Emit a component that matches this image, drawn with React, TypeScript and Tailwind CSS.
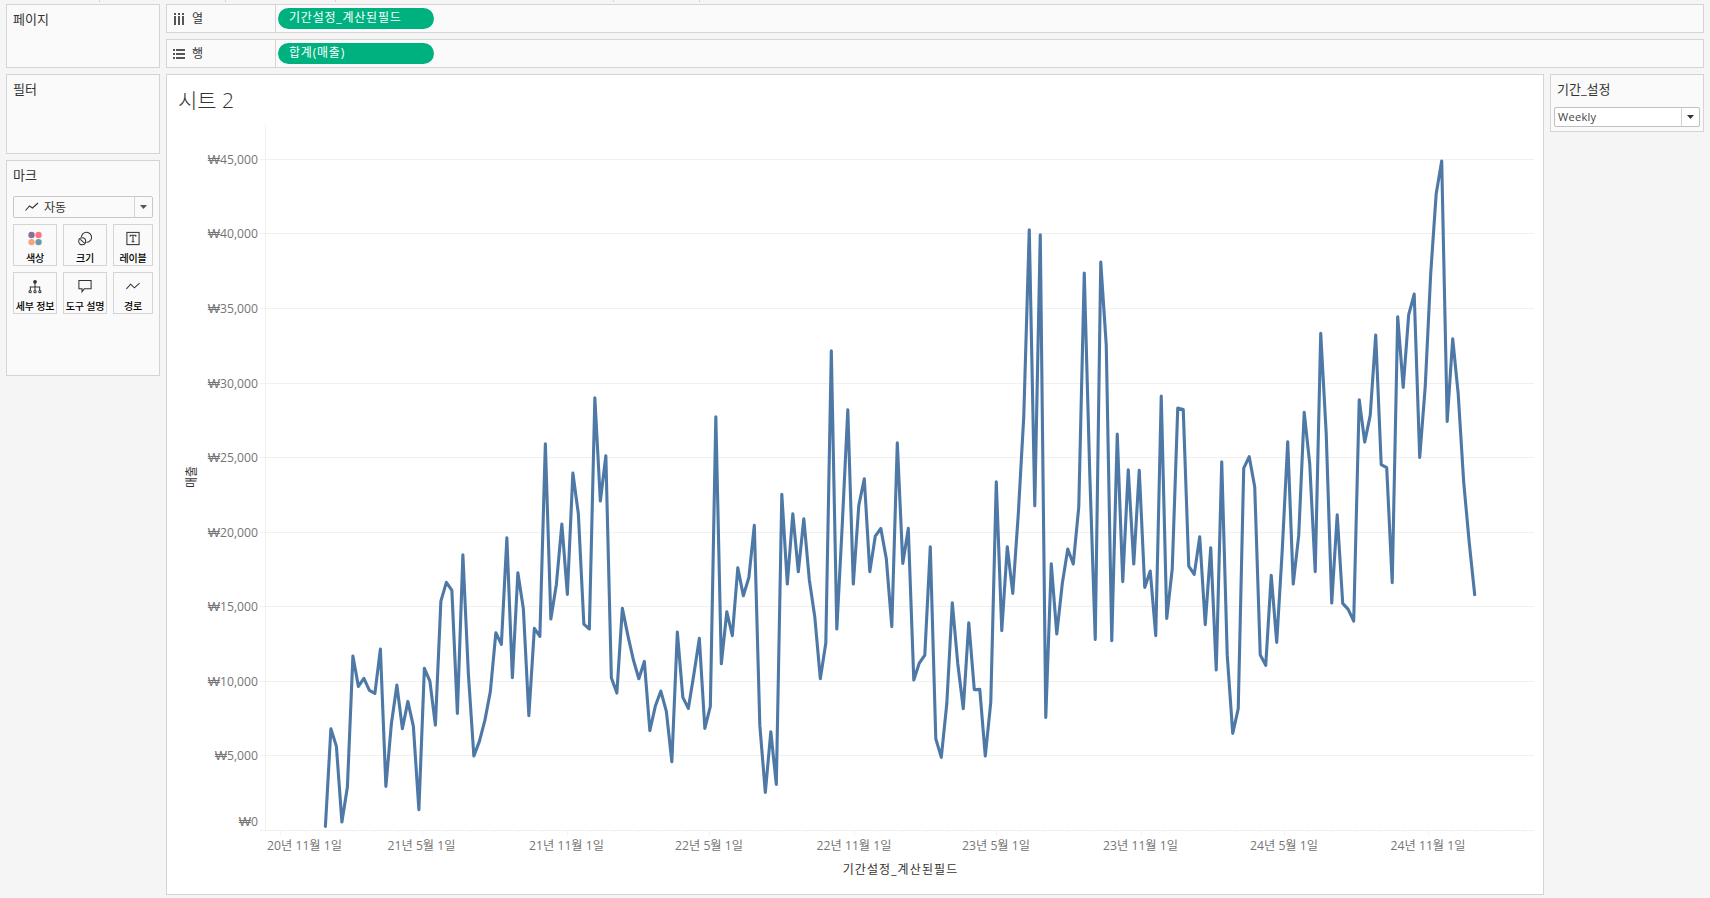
import type {ReactNode} from 'react';

// weekly sales, vertical position in thirds of a pixel
const WEEKLY = [
    1338, 1045, 1098, 1325, 1220, 827, 918, 894, 930, 939, 806, 1218, 1030, 914, 1045, 963, 1038, 1288, 864, 902,
    1034, 662, 606, 630, 999, 523, 880, 1127, 1083, 1020, 933, 757, 792, 472, 892, 577, 685, 1006, 744, 768,
    190, 716, 612, 431, 642, 278, 400, 731, 746, 52, 362, 226, 892, 938, 684, 765, 838, 895, 843, 1051,
    977, 932, 993, 1144, 755, 951, 984, 882, 774, 1044, 978, 109, 850, 694, 766, 562, 646, 592, 435, 1035,
    1236, 1054, 1212, 342, 611, 400, 574, 415, 598, 710, 895, 788, -89, 746, 430, 88, 611, 375, 295, 574,
    467, 444, 535, 739, 187, 549, 444, 899, 848, 824, 499, 1075, 1131, 970, 667, 850, 985, 727, 928, 927,
    1127, 965, 304, 751, 499, 639, 402, 108, -452, 376, -437, 1011, 550, 761, 610, 506, 551, 380, -322, 280,
    777, -355, -105, 781, 161, 604, 268, 551, 270, 621, 572, 766, 47, 714, 565, 83, 87, 557, 582, 469,
    733, 502, 869, 244, 825, 1059, 985, 263, 229, 320, 823, 855, 585, 786, 510, 184, 611, 465, 96, 250,
    574, -141, 160, 668, 403, 669, 687, 722, 58, 185, 105, -136, 253, 262, 607, -191, 21, -197, -259, 231,
    20, -320, -560, -658, 123, -125, 40, 305, 485, 643,
];

const LINE = WEEKLY.map((v, i) => `${(158.4 + i * 5.499).toFixed(2)},${(305.4 + v / 3).toFixed(2)}`).join(' ');

const GRID = [
    {y: 84, label: '45,000'},
    {y: 158, label: '40,000'},
    {y: 233, label: '35,000'},
    {y: 308, label: '30,000'},
    {y: 382, label: '25,000'},
    {y: 457, label: '20,000'},
    {y: 531, label: '15,000'},
    {y: 606, label: '10,000'},
    {y: 680, label: '5,000'},
];

const X_LABELS = [
    {x: 137.5, label: '20년 11월 1일'},
    {x: 254.5, label: '21년 5월 1일'},
    {x: 399.5, label: '21년 11월 1일'},
    {x: 542, label: '22년 5월 1일'},
    {x: 687, label: '22년 11월 1일'},
    {x: 829, label: '23년 5월 1일'},
    {x: 973.5, label: '23년 11월 1일'},
    {x: 1117, label: '24년 5월 1일'},
    {x: 1261, label: '24년 11월 1일'},
];

const START = Date.UTC(2020, 10, 1);
const MONTHS = Array.from({length: 53}, (_, i) => {
    const days = (Date.UTC(2020, 10 + i, 1) - START) / 86400000;
    return {x: Math.round(113 + days * 0.7859) + 0.5, major: i % 6 === 0};
});

const Card = ({className, title, children}: {className: string; title: string; children?: ReactNode}) => (
    <section className={`border border-[#d4d4d4] bg-[#fafafa] ${className}`}>
        <h2 className="pl-1.5 pt-1.5 text-[13px] leading-[17px] text-[#333]">{title}</h2>
        {children}
    </section>
);

const Shelf = ({icon, name, pill}: {icon: ReactNode; name: string; pill: string}) => (
    <div className="flex h-[29px] border border-[#d4d4d4] bg-[#fafafa]">
        <div className="flex w-[109px] items-center gap-[7px] border-r border-[#d4d4d4] pl-1.5 text-xs text-[#333]">
            {icon}
            <span className="pt-px">{name}</span>
        </div>
        <div className="ml-0.5 mt-[3px] h-[21px] w-[156px] whitespace-nowrap rounded-full bg-[#00b180] pl-[11px] text-[12px] leading-5 tracking-[0.8px] text-white">
            {pill}
        </div>
    </div>
);

const MarkButton = ({label, children}: {label: string; children: ReactNode}) => (
    <button className="flex h-[42px] flex-col items-center border border-[#d4d4d4] bg-[#fafafa] pt-1.5">
        <svg width="16" height="16" viewBox="0 0 16 16" fill="none" stroke="#333" strokeWidth="1.1">{children}</svg>
        <span className="mt-[5px] whitespace-nowrap text-[10px] font-medium leading-[14px] tracking-[-0.2px] text-black">{label}</span>
    </button>
);

const Won = () => <tspan fontFamily="Liberation Sans" fontSize="13">₩</tspan>;

const Chart = () => (
    <svg className="block" width="1376" height="819" viewBox="0 0 1376 819">
        <g stroke="#f0f0f0" shapeRendering="crispEdges">
            {GRID.map(g => <line key={g.y} x1="93" x2="1367" y1={g.y + 0.5} y2={g.y + 0.5}/>)}
            <line x1="93" x2="1367" y1="755.5" y2="755.5"/>
            <line x1="98.5" x2="98.5" y1="50" y2="755"/>
            {MONTHS.map(m => <line key={m.x} x1={m.x} x2={m.x} y1="756" y2={m.major ? 760 : 757}/>)}
        </g>
        <g fill="#757575" fontSize="12.2">
            {GRID.map(g => <text key={g.y} x="91" y={g.y + 5} textAnchor="end"><Won/>{g.label}</text>)}
            <text x="91" y="751" textAnchor="end"><Won/>0</text>
            {X_LABELS.map(l => <text key={l.x} x={l.x} y="775" textAnchor="middle">{l.label}</text>)}
        </g>
        <text x="733.5" y="799" textAnchor="middle" fontSize="12" letterSpacing="1.1" fill="#333">기간설정_계산된필드</text>
        <text transform="translate(29 402) rotate(-90)" textAnchor="middle" fontSize="12" fill="#333">매출</text>
        <polyline points={LINE} fill="none" stroke="#4e79a7" strokeWidth="3.1" strokeLinejoin="round" strokeLinecap="round"/>
    </svg>
);

const App = () => (
    <div className="h-[898px] w-[1710px] overflow-hidden bg-[#f5f5f5] px-1.5 font-['Open_Sans','Noto_Sans_CJK_KR',sans-serif]">
        <div className="flex h-1">
            <div className="ml-[93px] h-0.5 w-px bg-[#d4d4d4]"/>
            <div className="ml-[125px] h-0.5 w-px bg-[#d4d4d4]"/>
            <div className="ml-[109px] h-0.5 w-px bg-[#d4d4d4]"/>
            <div className="ml-[277px] h-0.5 w-px bg-[#d4d4d4]"/>
            <div className="ml-[85px] h-0.5 w-px bg-[#d4d4d4]"/>
        </div>
        <div className="flex gap-1.5">
            <aside className="flex w-[154px] flex-col gap-1.5">
                <Card className="h-16" title="페이지"/>
                <Card className="h-20" title="필터"/>
                <Card className="h-[216px]" title="마크">
                    <div className="ml-1.5 mt-3 flex h-[22px] w-[140px] items-center rounded-xs border border-[#c8c8c8]">
                        <svg className="ml-[11px]" width="14" height="10" viewBox="0 0 14 10" fill="none" stroke="#333" strokeWidth="1.1">
                            <path d="M0.500 8.500 4.500 4 7.500 6 13 1"/>
                        </svg>
                        <span className="ml-[5px] flex-1 pt-0.5 text-xs text-[#333]">자동</span>
                        <div className="flex h-full w-[18px] items-center justify-center border-l border-[#d4d4d4]">
                            <svg width="7" height="4" viewBox="0 0 7 4"><path d="M0 0h7L3.5 4z" fill="#555"/></svg>
                        </div>
                    </div>
                    <div className="ml-1.5 mt-1.5 grid grid-cols-[44px_44px_40px] gap-1.5">
                        <MarkButton label="색상">
                            <g stroke="none">
                                <circle cx="4.3" cy="4.3" r="3.4" fill="#86709c"/>
                                <circle cx="11.8" cy="4.3" r="3.4" fill="#ff7383"/>
                                <circle cx="4.3" cy="11.800" r="3.4" fill="#f5a57a"/>
                                <circle cx="11.8" cy="11.800" r="3.4" fill="#6f98a8"/>
                            </g>
                        </MarkButton>
                        <MarkButton label="크기">
                            <path d="M4.2 6.500A5.400 5.400 0 1 1 9.500 12.100"/>
                            <circle cx="5" cy="11" r="3.7"/>
                            <path d="m3 9 4.500 4"/>
                        </MarkButton>
                        <MarkButton label="레이블">
                            <rect x="1.5" y="1.5" width="13" height="13"/>
                            <path d="M5 6.200V4.500h6v1.700M8 4.500v7M6.500 11.500h3"/>
                        </MarkButton>
                        <MarkButton label="세부 정보">
                            <circle cx="8" cy="3" r="2" fill="#333" stroke="none"/>
                            <path d="M8 4v8M3 12V8.500h10V12"/>
                            <circle cx="2.8" cy="13.5" r="1.2"/>
                            <circle cx="8" cy="13.5" r="1.2"/>
                            <circle cx="13.2" cy="13.5" r="1.2"/>
                        </MarkButton>
                        <MarkButton label="도구 설명">
                            <path d="M1.500 1.500h13v9H7.200L4.800 13.500V10.500H1.500z"/>
                        </MarkButton>
                        <MarkButton label="경로">
                            <path d="M1 10.500 5.500 5.500 9.500 9.500 15 4.500"/>
                        </MarkButton>
                    </div>
                </Card>
            </aside>
            <main className="flex w-[1538px] flex-col gap-1.5">
                <div className="flex flex-col gap-1.5">
                    <Shelf
                        name="열"
                        pill="기간설정_계산된필드"
                        icon={
                            <svg width="12" height="12" viewBox="0 0 12 12" fill="#555">
                                <path d="M1 0h2v2H1zM5 0h2v2H5zM9 0h2v2H9zM1 3h2v9H1zM5 3h2v9H5zM9 3h2v9H9z"/>
                            </svg>
                        }
                    />
                    <Shelf
                        name="행"
                        pill="합계(매출)"
                        icon={
                            <svg width="12" height="12" viewBox="0 0 12 12" fill="#555">
                                <path d="M0 1h2v2H0zM0 5h2v2H0zM0 9h2v2H0zM3 1h9v2H3zM3 5h9v2H3zM3 9h9v2H3z"/>
                            </svg>
                        }
                    />
                </div>
                <div className="flex items-start gap-1.5">
                    <section className="relative h-[821px] w-[1378px] border border-[#d4d4d4] bg-white">
                        <h1 className="absolute left-[11px] top-[11px] text-[21px] font-light leading-7 text-[#333]">시트 2</h1>
                        <Chart/>
                    </section>
                    <Card className="h-[58px] w-[154px]" title="기간_설정">
                        <div className="ml-[3px] mt-[9px] flex h-5 w-[146px] items-center rounded-xs border border-[#c0c0c0] bg-white">
                            <span className="flex-1 pl-[3px] text-[11px] tracking-[0.3px] text-[#444]">Weekly</span>
                            <div className="flex h-full w-[18px] items-center justify-center border-l border-[#d4d4d4]">
                                <svg width="7" height="4" viewBox="0 0 7 4"><path d="M0 0h7L3.500 4z" fill="#333"/></svg>
                            </div>
                        </div>
                    </Card>
                </div>
            </main>
        </div>
    </div>
);

export default App;
